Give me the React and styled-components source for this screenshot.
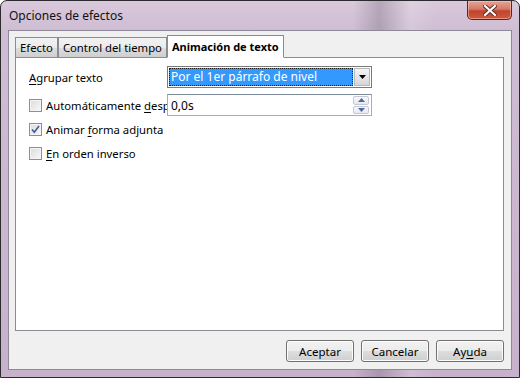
import React from "react";
import styled, { createGlobalStyle } from "styled-components";

const GlobalStyle = createGlobalStyle`
  html, body {
    margin: 0;
    padding: 0;
    background: #ffffff;
  }
  body {
    font-family: "Noto Sans", "Open Sans", sans-serif;
    font-size: 11.3px;
    color: #000;
  }
`;

const Window = styled.div`
  width: 520px;
  height: 378px;
  box-sizing: border-box;
  border: 1px solid #2c2a2e;
  border-radius: 7px 7px 0 0;
  display: flex;
  flex-direction: column;
  background:
    linear-gradient(90deg, rgba(255,255,255,0) 68%, rgba(90,80,95,0.28) 73%, rgba(255,255,255,0.15) 79%, rgba(255,255,255,0) 84%),
    linear-gradient(180deg, #d9c9dc 0%, #cfbdd3 30px, #c6b2ca 100%);
  overflow: hidden;
`;

const TitleBar = styled.div`
  height: 29px;
  flex: none;
  display: flex;
  justify-content: space-between;
  align-items: flex-start;
  padding-left: 8px;
  padding-right: 7px;
`;

const Title = styled.span`
  line-height: 29px;
  font-size: 12px;
  color: #111;
`;

const CloseButton = styled.div`
  width: 45px;
  height: 19px;
  box-sizing: border-box;
  border: 1px solid #5a2620;
  border-top: none;
  border-radius: 0 0 5px 5px;
  background: linear-gradient(180deg, #e6a494 0%, #d47a66 45%, #c2432c 55%, #cf5a3c 100%);
  display: flex;
  align-items: center;
  justify-content: center;
  box-shadow: inset 0 0 0 1px rgba(255, 210, 200, 0.5);
`;

const Client = styled.div`
  flex: 1;
  margin: 0 7px 7px 7px;
  border: 1px solid #8f8898;
  background: #f0f0f0;
  display: flex;
  flex-direction: column;
  padding: 5px 7px 0 6px;
`;

const TabStrip = styled.div`
  display: flex;
  align-items: flex-end;
  height: 22px;
  margin-bottom: -1px;
  position: relative;
  z-index: 1;
`;

const Tab = styled.div`
  box-sizing: border-box;
  height: ${(p) => (p.$active ? "23px" : "21px")};
  padding: 0 4px;
  border: 1px solid #898c95;
  border-bottom: ${(p) => (p.$active ? "1px solid #ffffff" : "1px solid #898c95")};
  margin-left: 0;
  background: ${(p) =>
    p.$active ? "#ffffff" : "linear-gradient(180deg, #f2f2f2 0%, #ebebeb 50%, #dddddd 51%, #cfcfcf 100%)"};
  font-weight: ${(p) => (p.$active ? "bold" : "normal")};
  font-size: ${(p) => (p.$active ? "11px" : "11.3px")};
  line-height: ${(p) => (p.$active ? "21px" : "20px")};
  white-space: nowrap;
`;

const Panel = styled.div`
  height: 274px;
  box-sizing: border-box;
  border: 1px solid #898c95;
  background: #ffffff;
  padding: 8px 0 0 13px;
  display: flex;
  flex-direction: column;
`;

const Row = styled.div`
  display: flex;
  align-items: center;
  height: ${(p) => p.$h || 22}px;
  margin-bottom: ${(p) => p.$gap || 0}px;
`;

const LabelCell = styled.div`
  width: 138px;
  flex: none;
  display: flex;
  align-items: center;
  overflow: hidden;
  white-space: nowrap;
`;

const CheckLabel = styled.label`
  display: flex;
  align-items: center;
  white-space: nowrap;
`;

const Box = styled.span`
  width: 13px;
  height: 13px;
  box-sizing: border-box;
  border: 1px solid #8e8f8f;
  background: linear-gradient(135deg, #dcdcdc 0%, #ececec 60%, #fbfbfb 100%);
  box-shadow: inset 0 0 0 1px #f4f4f4;
  margin-right: 4px;
  display: flex;
  align-items: center;
  justify-content: center;
  flex: none;
`;

const Key = styled.span`
  text-decoration: underline;
  text-underline-offset: 2px;
`;

const Select = styled.div`
  width: 205px;
  height: 22px;
  box-sizing: border-box;
  border: 1px solid #7a7a7a;
  background: #ffffff;
  padding: 1px;
  display: flex;
`;

const SelectValue = styled.div`
  flex: 1;
  background: #3399ff;
  color: #ffffff;
  outline: 1px dotted #1a1a1a;
  outline-offset: -1px;
  padding-left: 2px;
  line-height: 18px;
  font-size: 12px;
  white-space: nowrap;
`;

const ArrowButton = styled.div`
  width: 16px;
  margin-left: 1px;
  box-sizing: border-box;
  border: 1px solid #b8b8b8;
  background: linear-gradient(180deg, #f4f4f4 0%, #e6e6e6 50%, #d6d6d6 100%);
  display: flex;
  align-items: center;
  justify-content: center;
`;

const SpinBox = styled.div`
  width: 205px;
  height: 22px;
  box-sizing: border-box;
  border: 1px solid #abadb3;
  border-top-color: #7d8a99;
  background: #ffffff;
  display: flex;
  align-items: center;
  padding: 1px 2px 1px 3px;
`;

const SpinValue = styled.div`
  flex: 1;
  font-size: 12px;
`;

const SpinButtons = styled.div`
  width: 16px;
  height: 18px;
  display: flex;
  flex-direction: column;
  gap: 1px;
`;

const SpinHalf = styled.div`
  flex: 1;
  box-sizing: border-box;
  border: 1px solid #c3cad6;
  border-radius: 2px;
  background: linear-gradient(180deg, #f7f8fa 0%, #e5e9ef 100%);
  display: flex;
  align-items: center;
  justify-content: center;
`;

const ButtonRow = styled.div`
  display: flex;
  justify-content: flex-end;
  gap: 7px;
  margin-top: 9px;
`;

const Button = styled.div`
  width: 68px;
  height: 22px;
  box-sizing: border-box;
  border: 1px solid #707070;
  border-radius: 3px;
  background: linear-gradient(180deg, #f2f2f2 0%, #ebebeb 48%, #dddddd 52%, #cfcfcf 100%);
  box-shadow: inset 0 0 0 1px #fcfcfc;
  display: flex;
  align-items: center;
  justify-content: center;
  font-size: 11.5px;
`;

const Check = () => (
  <svg width="9" height="9" viewBox="0 0 9 9">
    <path d="M1 4.5 L3.3 7.2 L8 1" fill="none" stroke="#3f5a9a" strokeWidth="1.6" />
  </svg>
);

const Checkbox = ({ checked, children }) => (
  <CheckLabel>
    <Box>{checked && <Check />}</Box>
    {children}
  </CheckLabel>
);

export default function App() {
  return (
    <>
      <GlobalStyle />
      <Window>
        <TitleBar>
          <Title>Opciones de efectos</Title>
          <CloseButton>
            <svg width="14" height="11" viewBox="0 0 14 11">
              <path
                d="M2 1 L12 10 M12 1 L2 10"
                stroke="#5a2a24"
                strokeWidth="4"
                strokeLinecap="square"
              />
              <path
                d="M2 1 L12 10 M12 1 L2 10"
                stroke="#ffffff"
                strokeWidth="2.2"
                strokeLinecap="square"
              />
            </svg>
          </CloseButton>
        </TitleBar>
        <Client>
          <TabStrip>
            <Tab>Efecto</Tab>
            <Tab>Control del tiempo</Tab>
            <Tab $active>Animación de texto</Tab>
          </TabStrip>
          <Panel>
            <Row $gap={6}>
              <LabelCell>
                <span>
                  <Key>A</Key>grupar texto
                </span>
              </LabelCell>
              <Select>
                <SelectValue>Por el 1er párrafo de nivel</SelectValue>
                <ArrowButton>
                  <svg width="7" height="4" viewBox="0 0 7 4">
                    <path d="M0 0 H7 L3.5 4 Z" fill="#000" />
                  </svg>
                </ArrowButton>
              </Select>
            </Row>
            <Row $gap={1}>
              <LabelCell>
                <Checkbox>
                  <span>
                    Automáticamente <Key>d</Key>espués
                  </span>
                </Checkbox>
              </LabelCell>
              <SpinBox>
                <SpinValue>0,0s</SpinValue>
                <SpinButtons>
                  <SpinHalf>
                    <svg width="7" height="4" viewBox="0 0 7 4">
                      <path d="M0 4 H7 L3.5 0 Z" fill="#4d6a9c" />
                    </svg>
                  </SpinHalf>
                  <SpinHalf>
                    <svg width="7" height="4" viewBox="0 0 7 4">
                      <path d="M0 0 H7 L3.5 4 Z" fill="#4d6a9c" />
                    </svg>
                  </SpinHalf>
                </SpinButtons>
              </SpinBox>
            </Row>
            <Row $h={24}>
              <Checkbox checked>
                <span>
                  Animar <Key>f</Key>orma adjunta
                </span>
              </Checkbox>
            </Row>
            <Row $h={24}>
              <Checkbox>
                <span>
                  <Key>E</Key>n orden inverso
                </span>
              </Checkbox>
            </Row>
          </Panel>
          <ButtonRow>
            <Button>Aceptar</Button>
            <Button>Cancelar</Button>
            <Button>
              <span>
                Ay<Key>u</Key>da
              </span>
            </Button>
          </ButtonRow>
        </Client>
      </Window>
    </>
  );
}
